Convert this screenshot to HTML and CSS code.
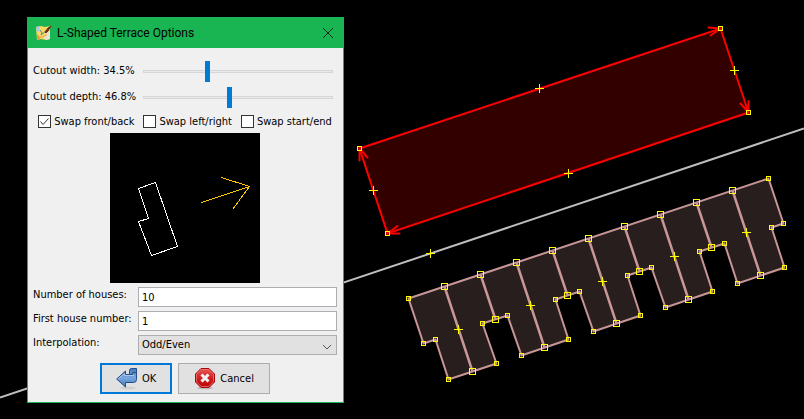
FILE: index.html
```html
<!DOCTYPE html>
<html lang="en">
<head>
<meta charset="utf-8">
<title>L-Shaped Terrace Options</title>
<link rel="stylesheet" href="styles.css">
</head>
<body>
<main class="workspace">
  <svg class="map" width="804" height="419" viewBox="0 0 804 419" aria-hidden="true">
    <defs>
      <rect id="node" x="-2" y="-2" width="4" height="4"/>
      <rect id="joint" x="-3" y="-3" width="6" height="6"/>
      <path id="mid" d="M-4.500 0H4.500M0-4.500V4.500"/>
    </defs>
    <path class="road" d="M0 397.500L804 128.500"/>
    <path class="area" d="M359.500 148.500L720.500 28.500L748.500 112.500L387.500 233.500Z"/>
    <path class="arrows" d="M708.500 27.500L720.500 28.500L710.500 35.500M740.500 103.500L748.500 112.500V101M397.500 226L387.500 233.500H399.500M359.500 160.500V148.500L367.500 157.500"/>
    <path class="houses" d="M408.500 298.500L768.500 178.500L783.500 223.500L771.500 227.500L784.500 267.500L737.500 283.500L724.500 243.500L699.500 251.500L712.500 291.500L665.500 307.500L651.500 267.500L627.500 275.500L640.500 315.500L593.500 331.500L579.500 291.500L555.500 299.500L568.500 339.500L521.500 355.500L507.500 315.500L482.500 323.500L496.500 363.500L448.500 379.500L435.500 339.500L423.500 343.500Z"/>
    <path class="walls" d="M444.500 286.500L472.500 371.500M480.500 274.500L495.500 319.500M516.500 262.500L544.500 347.500M552.500 250.500L567.500 295.500M588.500 238.500L616.500 323.500M624.500 226.500L639.500 271.500M660.500 214.500L688.500 299.500M696.500 202.500L711.500 247.500M732.500 190.500L760.500 275.500"/>
    <g class="nodes">
      <use href="#node" x="359.500" y="148.500"/><use href="#node" x="720.500" y="28.500"/><use href="#node" x="748.500" y="112.500"/><use href="#node" x="387.500" y="233.500"/>
      <use href="#node" x="408.500" y="298.500"/><use href="#node" x="768.500" y="178.500"/><use href="#node" x="783.500" y="223.500"/><use href="#node" x="771.500" y="227.500"/><use href="#node" x="784.500" y="267.500"/>
      <use href="#node" x="737.500" y="283.500"/><use href="#node" x="724.500" y="243.500"/><use href="#node" x="699.500" y="251.500"/><use href="#node" x="712.500" y="291.500"/>
      <use href="#node" x="665.500" y="307.500"/><use href="#node" x="651.500" y="267.500"/><use href="#node" x="627.500" y="275.500"/><use href="#node" x="640.500" y="315.500"/>
      <use href="#node" x="593.500" y="331.500"/><use href="#node" x="579.500" y="291.500"/><use href="#node" x="555.500" y="299.500"/><use href="#node" x="568.500" y="339.500"/>
      <use href="#node" x="521.500" y="355.500"/><use href="#node" x="507.500" y="315.500"/><use href="#node" x="482.500" y="323.500"/><use href="#node" x="496.500" y="363.500"/>
      <use href="#node" x="448.500" y="379.500"/><use href="#node" x="435.500" y="339.500"/><use href="#node" x="423.500" y="343.500"/>
      <use href="#joint" x="444.500" y="286.500"/><use href="#joint" x="480.500" y="274.500"/><use href="#joint" x="516.500" y="262.500"/><use href="#joint" x="552.500" y="250.500"/><use href="#joint" x="588.500" y="238.500"/>
      <use href="#joint" x="624.500" y="226.500"/><use href="#joint" x="660.500" y="214.500"/><use href="#joint" x="696.500" y="202.500"/><use href="#joint" x="732.500" y="190.500"/>
      <use href="#joint" x="472.500" y="371.500"/><use href="#joint" x="495.500" y="319.500"/><use href="#joint" x="544.500" y="347.500"/><use href="#joint" x="567.500" y="295.500"/><use href="#joint" x="616.500" y="323.500"/>
      <use href="#joint" x="639.500" y="271.500"/><use href="#joint" x="688.500" y="299.500"/><use href="#joint" x="711.500" y="247.500"/><use href="#joint" x="760.500" y="275.500"/>
      <use href="#mid" x="539.500" y="88.500"/><use href="#mid" x="734.500" y="70.500"/><use href="#mid" x="568.500" y="173.500"/><use href="#mid" x="373.500" y="190.500"/><use href="#mid" x="430.500" y="253.500"/>
      <use href="#mid" x="458.500" y="329.500"/><use href="#mid" x="530.500" y="305.500"/><use href="#mid" x="602.500" y="281.500"/><use href="#mid" x="674.500" y="256.500"/><use href="#mid" x="746.500" y="232.500"/>
    </g>
  </svg>

  <form class="dialog" role="dialog" aria-labelledby="dialog-title">
    <header class="titlebar">
      <svg class="app-icon" width="16" height="16" viewBox="0 0 16 16" aria-hidden="true">
        <path d="M0 2L5 1L9 2L14 1V14L10 15L5 14L1 15Z" fill="#f8d860"/>
        <path d="M0 2L4 1L3 6L1 8Z" fill="#a5cfe0"/>
        <path d="M10 9L14 6V14L10 15L8 13Z" fill="#e2e6d8"/>
        <path d="M1 9L4 12L4 14L1 15Z" fill="#f09a48"/>
        <path d="M4 5L6 8L5 10L10 6" fill="none" stroke="#5b86a8"/>
        <path d="M3 13L11 10" stroke="#efa34d"/>
        <path d="M15 1L12 3L9 7L10 8L12 6Z" fill="#703019" stroke="#703019"/>
      </svg>
      <h1 class="title" id="dialog-title">L-Shaped Terrace Options</h1>
      <button class="close" type="button" aria-label="Close">
        <svg width="12" height="12" viewBox="0 0 12 12" aria-hidden="true"><path d="M1 1L11 11M11 1L1 11" stroke="#092a14" fill="none"/></svg>
      </button>
    </header>
    <div class="content">
      <div class="slider-row">
        <label for="cutout-width">Cutout width: 34.5%</label>
        <input class="slider" id="cutout-width" type="range" min="0" max="103" step="0.1" value="34.5">
      </div>
      <div class="slider-row">
        <label for="cutout-depth">Cutout depth: 46.8%</label>
        <input class="slider" id="cutout-depth" type="range" min="0" max="103" step="0.1" value="46.8">
      </div>
      <div class="checks">
        <label class="check"><input type="checkbox" checked><svg class="tick" width="13" height="13" viewBox="0 0 13 13" aria-hidden="true"><path d="M2.500 6.500L5 9.500L10.500 3.500"/></svg>Swap front/back</label>
        <label class="check"><input type="checkbox">Swap left/right</label>
        <label class="check"><input type="checkbox">Swap start/end</label>
      </div>
      <svg class="preview" width="150" height="150" viewBox="0 0 150 150" role="img" aria-label="House outline">
        <path d="M28.500 55.500L45.500 49.500L67.500 113.500L41.500 122.500L28.500 88.500L38.500 85.500Z" stroke="#fff"/>
        <path d="M91.500 69.500L139.500 53.500M111.500 44.500L139.500 53.500L122.500 76.500" stroke="#ffc800"/>
      </svg>
      <div class="fields">
        <label for="houses">Number of houses:</label>
        <input class="field" id="houses" type="text" value="10">
        <label for="first">First house number:</label>
        <input class="field" id="first" type="text" value="1">
        <label for="interpolation">Interpolation:</label>
        <div class="select-box">
          <select class="field" id="interpolation"><option>Odd/Even</option></select>
          <svg class="chevron" width="10" height="6" viewBox="0 0 10 6" aria-hidden="true"><path d="M1 1L5 5L9 1" fill="none" stroke="#555"/></svg>
        </div>
      </div>
      <div class="actions">
        <button class="button primary" type="submit">
          <svg width="22" height="22" viewBox="0 0 22 22" aria-hidden="true">
            <defs><linearGradient id="blue" x2="0" y2="1"><stop stop-color="#4779b8"/><stop offset=".5" stop-color="#79a6de"/><stop offset="1" stop-color="#427bc1"/></linearGradient></defs>
            <ellipse cx="12" cy="20" rx="8" ry="1.500" fill="#d0d0d0"/>
            <path d="M9.500 3V6.500H13.500V2.500Q13.500 .5 15.500 .5H20.500V11.500Q20.500 14.500 17.500 14.500H9.500V19L.7 11Z" fill="url(#blue)" stroke="#244e88"/>
            <path d="M8.500 5.500V7.500H18M2.500 10.800L8 6" fill="none" stroke="#a9c9ef"/>
            <path d="M13.500 6.500H16.500Q15.500 4.500 17 4.500H20.500" fill="none" stroke="#244e88"/>
          </svg>
          OK
        </button>
        <button class="button" type="button">
          <svg width="22" height="22" viewBox="0 0 22 22" aria-hidden="true">
            <defs><linearGradient id="red" x2="0" y2="1"><stop stop-color="#e65a5a"/><stop offset=".5" stop-color="#d32020"/><stop offset="1" stop-color="#bb0505"/></linearGradient></defs>
            <ellipse cx="11" cy="20" rx="8" ry="1.500" fill="#bcbcbc"/>
            <path d="M7 .5H15L20.500 6V14L15 19.500H7L1.500 14V6Z" fill="url(#red)" stroke="#a80808"/>
            <path d="M7.300 1.500H14.700L19.500 6.300V13.700L14.700 18.500H7.300L2.500 13.700V6.300Z" fill="none" stroke="#ef8080" stroke-opacity=".7"/>
            <path d="M7.500 6.500L14.500 13.500M14.500 6.500L7.500 13.500" stroke="#f3f3f3" stroke-width="3"/>
          </svg>
          Cancel
        </button>
      </div>
    </div>
  </form>
</main>
</body>
</html>
```
FILE: styles.css
```css
* { box-sizing: border-box; }

body {
  margin: 0;
  background: #000;
  color: #000;
  font: 11px/16px "DejaVu Sans Condensed", "Noto Sans", sans-serif;
}

.workspace {
  position: relative;
  min-height: 100vh;
  overflow: hidden;
}

.map { display: block; }
.road { stroke: #bebebe; stroke-width: 2; }
.area { fill: #300; stroke: #f00; stroke-width: 2; }
.arrows { fill: none; stroke: #f00; stroke-width: 2; stroke-linecap: round; }
.houses { fill: #281e1e; stroke: #c89696; stroke-width: 2; }
.walls { fill: none; stroke: #c89696; stroke-width: 2.500; }
.nodes { fill: none; stroke: #ff0; stroke-width: 1; }

.dialog {
  position: absolute;
  top: 17px;
  left: 27px;
  width: 317px;
  border: 1px solid #18b552;
  background: #f0f0f0;
}

.titlebar {
  display: flex;
  align-items: center;
  gap: 5px;
  height: 30px;
  padding: 0 9px 0 8px;
  background: #18b552;
}

.title {
  flex: 1;
  margin: 0;
  font: 12px/16px Roboto, "Noto Sans", sans-serif;
}

.close {
  display: flex;
  padding: 0;
  border: 0;
  background: none;
}

.content { padding: 10px 6px 8px 5px; }

.slider-row {
  display: grid;
  grid-template-columns: 110px 1fr;
  align-items: center;
  height: 26px;
  padding-right: 4px;
  white-space: nowrap;
}

.slider {
  width: 100%;
  height: 21px;
  margin: 0;
  appearance: none;
  background: transparent;
}

.slider::-webkit-slider-runnable-track {
  height: 3px;
  border: 1px solid #d6d6d6;
  background: #e7eaea;
}

.slider::-webkit-slider-thumb {
  width: 5px;
  height: 21px;
  margin-top: -10px;
  appearance: none;
  background: #007ad9;
}

.checks {
  display: flex;
  justify-content: center;
  gap: 9px;
  height: 23px;
}

.check {
  position: relative;
  display: flex;
  align-items: center;
  gap: 3px;
  white-space: nowrap;
}

.check input {
  width: 13px;
  height: 13px;
  margin: 0;
  appearance: none;
  border: 1px solid #333;
  background: #fff;
}

.tick {
  position: absolute;
  left: 0;
  fill: none;
  stroke: #333;
}

.preview {
  display: block;
  margin: 0 auto 4px;
  background: #000;
  fill: none;
  shape-rendering: crispEdges;
}

.fields {
  display: grid;
  grid-template-columns: 105px 1fr;
  row-gap: 4px;
  white-space: nowrap;
}

.field {
  display: block;
  width: 100%;
  height: 20px;
  padding: 0 3px;
  border: 1px solid #abadb3;
  border-radius: 0;
  background: #fff;
  color: #000;
  font: inherit;
}

select.field {
  appearance: none;
  border-color: #adadad;
  background: #e1e1e1;
}

.select-box { position: relative; }

.chevron {
  position: absolute;
  top: 9px;
  right: 5px;
  pointer-events: none;
}

.actions {
  display: flex;
  justify-content: center;
  gap: 6px;
  padding-top: 8px;
}

.button {
  display: flex;
  align-items: center;
  gap: 4px;
  height: 31px;
  padding: 0 15px;
  border: 1px solid #adadad;
  background: #e1e1e1;
  color: #000;
  font: inherit;
}

.primary {
  padding: 0 14px;
  border: 2px solid #0078d7;
}
```
